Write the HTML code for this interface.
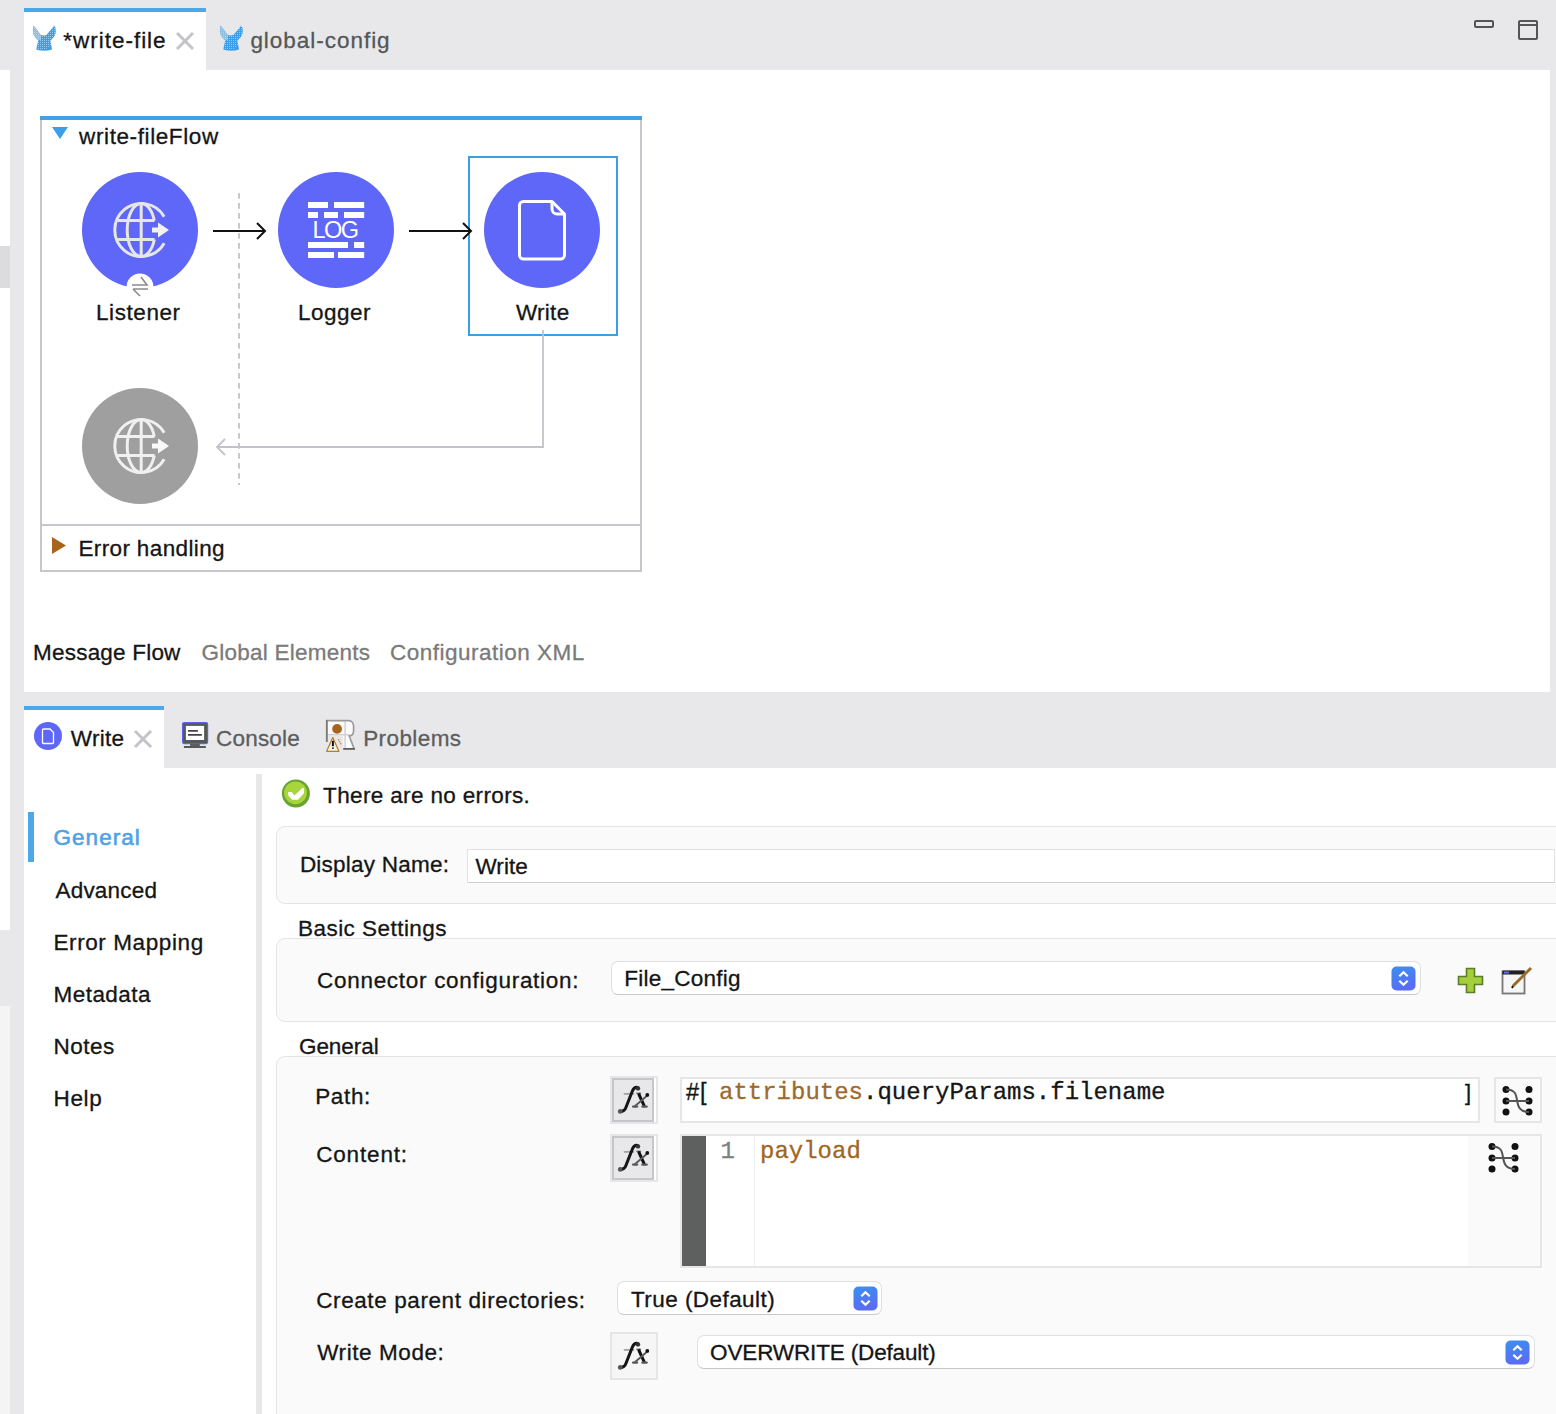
<!DOCTYPE html>
<html><head><meta charset="utf-8">
<style>
*{box-sizing:border-box}
html,body{margin:0;padding:0;width:1556px;height:1414px;overflow:hidden;background:#fff;font-family:"Liberation Sans",sans-serif;color:#151515}
.a{position:absolute}
.t{position:absolute;font-size:22.5px;line-height:1;white-space:nowrap;-webkit-text-stroke-width:0.3px}
.g{background:#e8e8ea}
svg{position:absolute;overflow:visible}
</style></head><body>
<svg width="0" height="0" style="position:absolute"><defs><linearGradient id="stg" x1="0" y1="0" x2="0.3" y2="1"><stop offset="0" stop-color="#3b90f0"/><stop offset="1" stop-color="#5a6cf2"/></linearGradient></defs></svg>
<!-- left strips -->
<div class="a g" style="left:0;top:0;width:10px;height:70px"></div>
<div class="a" style="left:0;top:246px;width:10px;height:42px;background:#dcdcdf"></div>
<div class="a g" style="left:0;top:930px;width:10px;height:76px"></div>
<div class="a" style="left:0;top:1006px;width:10px;height:408px;background:#f4f4f5"></div>
<div class="a g" style="left:10px;top:0;width:14px;height:1414px"></div>

<!-- top editor tab bar -->
<div class="a g" style="left:24px;top:0;width:1532px;height:70px"></div>
<div class="a" style="left:24px;top:8px;width:182px;height:62px;background:#fff"></div>
<div class="a" style="left:24px;top:8px;width:182px;height:4px;background:#4ba8ea"></div>
<div class="a g" style="left:1550px;top:70px;width:6px;height:622px"></div>

<div class="t" style="left:63.3px;top:30px;font-size:22.5px;letter-spacing:0.98px">*write-file</div>
<div class="t" style="left:250.4px;top:30px;font-size:22.5px;color:#555757;letter-spacing:0.97px">global-config</div>

<!-- close x -->
<svg style="left:175px;top:31px" width="20" height="20" viewBox="0 0 20 20"><path d="M2 2L18 18M18 2L2 18" stroke="#c4c4c8" stroke-width="3"/></svg>

<!-- min/max -->
<div class="a" style="left:1474px;top:20px;width:20px;height:8px;border:2px solid #555;border-radius:2px"></div>
<div class="a" style="left:1518px;top:20px;width:20px;height:20px;border:2px solid #555;border-radius:2px"></div>
<div class="a" style="left:1518px;top:24px;width:20px;height:2px;background:#555"></div>


<!-- mule icons -->
<svg style="left:30px;top:22px" width="30" height="32" viewBox="0 0 30 32"><defs><pattern id="dp1" width="2" height="2" patternUnits="userSpaceOnUse"><rect x="0" y="0" width="1" height="1" fill="#fff"/></pattern><clipPath id="mc1"><path d="M3.6 3.6C2.6 6 2.6 10.5 3.8 13C5 15.4 6.8 17.2 8.2 18.6L6.2 27.6Q14 30 22 27.6L20.4 18.6C22 17.2 23.8 15.4 25 13C26.2 10.5 26 6 24.4 3.6C22 6.5 19 10 16.5 13C15 13.6 12.6 13.6 11 13C8.6 10 6 6.5 3.6 3.6Z"/></clipPath></defs><g clip-path="url(#mc1)"><rect width="30" height="32" fill="#3a9fe8"/><path d="M0 0H30V17L12 30H0Z" fill="url(#dp1)" opacity="0.45"/><path d="M0 0H11V18H0Z" fill="#d8d8d8" opacity="0.55"/></g></svg>
<svg style="left:217px;top:22px" width="30" height="32" viewBox="0 0 30 32"><defs><pattern id="dp2" width="2" height="2" patternUnits="userSpaceOnUse"><rect x="0" y="0" width="1" height="1" fill="#fff"/></pattern><clipPath id="mc2"><path d="M3.6 3.6C2.6 6 2.6 10.5 3.8 13C5 15.4 6.8 17.2 8.2 18.6L6.2 27.6Q14 30 22 27.6L20.4 18.6C22 17.2 23.8 15.4 25 13C26.2 10.5 26 6 24.4 3.6C22 6.5 19 10 16.5 13C15 13.6 12.6 13.6 11 13C8.6 10 6 6.5 3.6 3.6Z"/></clipPath></defs><g clip-path="url(#mc2)"><rect width="30" height="32" fill="#3a9fe8"/><path d="M0 0H30V17L12 30H0Z" fill="url(#dp2)" opacity="0.45"/><path d="M0 0H11V18H0Z" fill="#d8d8d8" opacity="0.55"/></g></svg>

<!-- flow box -->
<div class="a" style="left:40px;top:116px;width:602px;height:456px;border:2px solid #c6c6cc;border-top:none"></div>
<div class="a" style="left:40px;top:116px;width:602px;height:4px;background:#3fa2e8"></div>
<div class="a" style="left:40px;top:524px;width:602px;height:2px;background:#c6c6cc"></div>
<svg style="left:52px;top:127px" width="16" height="13" viewBox="0 0 16 13"><path d="M0 0H16L8 12Z" fill="#3a9fe8"/></svg>
<div class="t" style="left:79.1px;top:126px;letter-spacing:0.6px">write-fileFlow</div>
<svg style="left:52px;top:537px" width="14" height="18" viewBox="0 0 14 18"><path d="M0 0L14 8.5L0 17Z" fill="#a8641c"/></svg>
<div class="t" style="left:78.4px;top:538px;letter-spacing:0.37px">Error handling</div>

<!-- circles -->
<div class="a" style="left:82px;top:172px;width:116px;height:116px;border-radius:50%;background:#5f67f8"></div>
<div class="a" style="left:278px;top:172px;width:116px;height:116px;border-radius:50%;background:#5f67f8"></div>
<div class="a" style="left:484px;top:172px;width:116px;height:116px;border-radius:50%;background:#5f67f8"></div>
<div class="a" style="left:82px;top:388px;width:116px;height:116px;border-radius:50%;background:#a09fa0"></div>
<div class="a" style="left:468px;top:156px;width:150px;height:180px;border:2px solid #38a0e6"></div>

<!-- globe -->
<svg style="left:82px;top:172px" width="116" height="116" viewBox="0 0 116 116">
<g fill="none" stroke="#e6e6e6" stroke-width="3">
<path d="M82.2 44.7A26.5 26.5 0 1 0 82.2 71.3"/>
<path d="M59.2 31.5A14 26.5 0 0 0 59.2 84.5M59.2 31.5A14 26.5 0 0 1 72.3 48.5M72.3 67.5A14 26.5 0 0 1 59.2 84.5"/>
<path d="M59.2 31.5V84.5M35.5 48.5H72.5M35.5 67.5H72.5"/>
</g>
<path d="M70 55.5H76V50.5L87 58L76 65.5V60.5H70Z" fill="#f2f2f2"/>
<circle cx="58" cy="115" r="13.5" fill="#fff"/>
<path d="M50 113H65L59 105M51 117H66M51 117L58 124" fill="none" stroke="#8c8c8c" stroke-width="1.6"/>
</svg>
<svg style="left:82px;top:388px" width="116" height="116" viewBox="0 0 116 116">
<g fill="none" stroke="#f0f0f0" stroke-width="3">
<path d="M82.2 44.7A26.5 26.5 0 1 0 82.2 71.3"/>
<path d="M59.2 31.5A14 26.5 0 0 0 59.2 84.5M59.2 31.5A14 26.5 0 0 1 72.3 48.5M72.3 67.5A14 26.5 0 0 1 59.2 84.5"/>
<path d="M59.2 31.5V84.5M35.5 48.5H72.5M35.5 67.5H72.5"/>
</g>
<path d="M70 55.5H76V50.5L87 58L76 65.5V60.5H70Z" fill="#f8f8f8"/>
</svg>

<!-- LOG icon -->
<svg style="left:296px;top:190px" width="80" height="80" viewBox="0 0 80 80">
<g fill="#fff">
<rect x="12" y="12" width="20" height="6"/><rect x="38" y="12" width="30.2" height="6"/>
<rect x="12" y="22" width="10" height="6"/><rect x="28" y="22" width="14" height="6"/><rect x="48" y="22" width="20.2" height="6"/>
<rect x="12" y="52" width="40" height="6"/><rect x="58" y="52" width="10.2" height="6"/>
<rect x="12" y="62" width="26" height="6"/><rect x="42" y="62" width="26.2" height="6"/>
</g>
<text x="16.6" y="48.2" font-family="Liberation Sans" font-size="23.5" fill="#fff" textLength="46.5">LOG</text>
</svg>

<!-- doc icon -->
<svg style="left:484px;top:172px" width="116" height="116" viewBox="0 0 116 116">
<path d="M39.5 29.5H68L80.5 42V83A4 4 0 0 1 76.5 87H39.5A4 4 0 0 1 35.5 83V33.5A4 4 0 0 1 39.5 29.5Z" fill="none" stroke="#fff" stroke-width="3" stroke-linejoin="round"/>
<path d="M68 29.5V37A5 5 0 0 0 73 42H80.5" fill="none" stroke="#fff" stroke-width="3" stroke-linejoin="round"/>
</svg>

<!-- arrows -->
<svg style="left:0;top:0" width="700" height="600" viewBox="0 0 700 600">
<path d="M239 193V485" stroke="#c2c2c8" stroke-width="1.8" stroke-dasharray="5.7 4.3" fill="none"/>
<path d="M213 231H265M257 223L265 231L257 239" stroke="#111" stroke-width="2" fill="none"/>
<path d="M409 231H471M463 223L471 231L463 239" stroke="#111" stroke-width="2" fill="none"/>
<path d="M543 330V447H217M225 439L217 447L225 455" stroke="#c2c2c8" stroke-width="1.8" fill="none"/>
</svg>

<div class="t" style="left:96px;top:302px;letter-spacing:0.57px">Listener</div>
<div class="t" style="left:298px;top:302px;letter-spacing:0.5px">Logger</div>
<div class="t" style="left:515.9px;top:302px;letter-spacing:0.3px">Write</div>


<!-- canvas bottom tabs -->
<div class="t" style="left:33.1px;top:641.5px;letter-spacing:0.2px">Message Flow</div>
<div class="t" style="left:201.5px;top:641.5px;color:#7a7a7a;letter-spacing:0.24px">Global Elements</div>
<div class="t" style="left:389.9px;top:641.5px;color:#7a7a7a;letter-spacing:0.5px">Configuration XML</div>

<!-- properties tab bar -->
<div class="a g" style="left:24px;top:692px;width:1532px;height:76px"></div>
<div class="a" style="left:24px;top:706px;width:140px;height:62px;background:#fff"></div>
<div class="a" style="left:24px;top:706px;width:140px;height:4px;background:#4ba8ea"></div>
<div class="a" style="left:33.6px;top:721.6px;width:28.4px;height:28.4px;border-radius:50%;background:#5f67f8"></div>
<svg style="left:33px;top:721px" width="30" height="30" viewBox="0 0 30 30"><path d="M10.5 8H17L20.5 11.5V21.5A1 1 0 0 1 19.5 22.5H10.5A1 1 0 0 1 9.5 21.5V9A1 1 0 0 1 10.5 8Z" fill="none" stroke="#fff" stroke-width="1.3"/></svg>
<div class="t" style="left:70.8px;top:727.5px;letter-spacing:0.3px">Write</div>
<svg style="left:133px;top:729px" width="20" height="20" viewBox="0 0 20 20"><path d="M2 2L18 18M18 2L2 18" stroke="#c4c4c8" stroke-width="3"/></svg>
<!-- console icon -->
<svg style="left:181px;top:721px" width="28" height="28" viewBox="0 0 28 28">
<rect x="1.6" y="1.6" width="25" height="21" rx="1.5" fill="#555a55" stroke="#5a63e8" stroke-width="1.2"/>
<rect x="4.9" y="4.9" width="18.2" height="14.1" fill="#fff"/>
<path d="M7 9.9H16.9M7 13.9H20.9" stroke="#444" stroke-width="1.7"/>
<rect x="9.1" y="22.6" width="9.7" height="2.4" fill="#5a5c6a"/>
<rect x="2.9" y="25" width="21.9" height="2" fill="#555a55"/>
</svg>
<div class="t" style="left:216.1px;top:727.5px;color:#5c5e5e;letter-spacing:0.17px">Console</div>
<!-- problems icon -->
<svg style="left:320px;top:714px" width="40" height="42" viewBox="0 0 40 42">
<path d="M6.5 6.5H28.5C32 6.5 33.5 9 33.5 12V17C33.5 20 32 21.5 29 22L34.5 34.5H23.5L23 22H7Z" fill="#fbfbfb"/>
<path d="M25.1 7.5V34M7.5 20.8H30" stroke="#cfcfd4" stroke-width="1.4"/>
<path d="M6.8 6.6H28.5C32 6.6 33.6 9.5 33.6 12.5V17C33.6 20 32 21.7 29.3 22.2L34 34.5" fill="none" stroke="#9a9a9a" stroke-width="1.7"/>
<rect x="5.9" y="5.9" width="1.9" height="22" fill="#7a7a7a"/>
<path d="M23.2 34.9H35" stroke="#555" stroke-width="1.7"/>
<circle cx="17.1" cy="14.9" r="4.9" fill="#a8641e"/>
<path d="M12.8 23.5L6.6 37.3H18.9Z" fill="#eef3dc" stroke="#b87a30" stroke-width="1.2" stroke-linejoin="round"/>
<path d="M12.9 26.8V32.2" stroke="#111" stroke-width="2"/>
<path d="M12.9 33.4V34.8" stroke="#111" stroke-width="1.8"/>
<path d="M18.4 25.2L21.4 31.2" stroke="#c07830" stroke-width="1.2" stroke-dasharray="1.3 0.9"/>
</svg>
<div class="t" style="left:363.2px;top:727.5px;color:#5c5e5e;letter-spacing:0.4px">Problems</div>

<!-- sidebar -->
<div class="a" style="left:28px;top:812px;width:6px;height:50px;background:#4ea7e6"></div>
<div class="t" style="left:53.5px;top:827px;color:#4fa3e4;font-size:22.5px;-webkit-text-stroke:0.6px #4fa3e4;letter-spacing:1.05px">General</div>
<div class="t" style="left:55.5px;top:879.5px;letter-spacing:0.2px">Advanced</div>
<div class="t" style="left:53.5px;top:932px;letter-spacing:0.59px">Error Mapping</div>
<div class="t" style="left:53.5px;top:983.5px;letter-spacing:0.46px">Metadata</div>
<div class="t" style="left:53.5px;top:1035.5px;letter-spacing:0.5px">Notes</div>
<div class="t" style="left:53.5px;top:1087.5px;letter-spacing:0.63px">Help</div>
<div class="a g" style="left:256px;top:774px;width:6px;height:640px"></div>


<!-- properties content -->
<svg style="left:281px;top:779px" width="30" height="30" viewBox="0 0 30 30">
<circle cx="14.9" cy="14.5" r="14" fill="#68a232"/>
<circle cx="14.5" cy="13.8" r="11.4" fill="#a8d43c"/>
<path d="M7.2 13.1H10.8L13.4 16.5L21.3 9.1H23V14.2L17 20.8H11.2L7.2 16.5Z" fill="#fff"/>
</svg>
<div class="t" style="left:323.1px;top:785px;letter-spacing:0.35px">There are no errors.</div>

<div class="a" style="left:276px;top:826px;width:1300px;height:78px;background:#fafafa;border:1px solid #e4e5e8;border-radius:9px"></div>
<div class="t" style="left:299.9px;top:854px;letter-spacing:0.23px">Display Name:</div>
<div class="a" style="left:467px;top:849px;width:1088px;height:34px;background:#fff;border:1px solid #e2e2e2;border-bottom-color:#cfcfcf"></div>
<div class="t" style="left:475.4px;top:856px;letter-spacing:0.1px">Write</div>

<div class="a" style="left:276px;top:938px;width:1300px;height:84px;background:#fafafa;border:1px solid #e4e5e8;border-radius:9px"></div>
<div class="t" style="left:298px;top:917.5px;letter-spacing:0.46px">Basic Settings</div>
<div class="t" style="left:317px;top:970px;letter-spacing:0.71px">Connector configuration:</div>
<div class="a" style="left:611px;top:961px;width:810px;height:34px;background:#fff;border:1px solid #e0e0e0;border-bottom:1.5px solid #c8c8cc;border-radius:7px"></div>
<div class="t" style="left:624.2px;top:967.5px;letter-spacing:0.24px">File_Config</div>
<svg style="left:1391px;top:966px" width="26" height="25" viewBox="0 0 26 25"><rect x="0.5" y="0.5" width="24" height="24" rx="5" fill="url(#stg)"/><path d="M8.3 10.2L12.5 6.2L16.7 10.2M8.3 14.8L12.5 18.8L16.7 14.8" fill="none" stroke="#fff" stroke-width="2.2"/></svg>
<!-- green plus -->
<svg style="left:1457px;top:967px" width="28" height="28" viewBox="0 0 28 28"><path d="M9.5 1.5H17.5V9.5H25.5V17.5H17.5V25.5H9.5V17.5H1.5V9.5H9.5Z" fill="#a4cf3a" stroke="#5c7d2a" stroke-width="1.6"/></svg>
<!-- edit icon -->
<svg style="left:1501px;top:965px" width="34" height="32" viewBox="0 0 34 32">
<rect x="1.5" y="6.5" width="22" height="22" fill="#f6f6f6" stroke="#777" stroke-width="1.8"/>
<rect x="1.5" y="5.5" width="22" height="4" fill="#222"/>
<rect x="3" y="6.5" width="5" height="2" fill="#5a6ff0"/>
<path d="M12 21L30 3" stroke="#9a6a2a" stroke-width="3"/>
<path d="M12 21L11 23" stroke="#111" stroke-width="2"/>
</svg>

<div class="a" style="left:276px;top:1056px;width:1300px;height:400px;background:#fafafa;border:1px solid #e4e5e8;border-radius:9px"></div>
<div class="t" style="left:299px;top:1035.5px;letter-spacing:-0.07px">General</div>

<div class="t" style="left:315.2px;top:1085.5px;letter-spacing:0.65px">Path:</div>
<div class="t" style="left:316.2px;top:1144px;letter-spacing:0.83px">Content:</div>
<div class="t" style="left:316.2px;top:1290px;letter-spacing:0.6px">Create parent directories:</div>
<div class="t" style="left:317.2px;top:1342px;letter-spacing:0.58px">Write Mode:</div>


<!-- path row -->
<div class="a" style="left:610px;top:1076px;width:48px;height:48px;border:2px solid #e6e6e8;background:#fff"><div class="a" style="left:0;top:0;width:42px;height:44px;border:2px solid #c5c6ca;background:#e8e8ea"></div><svg style="left:2px;top:4px" width="40" height="36" viewBox="0 0 40 36"><g fill="none" stroke-linecap="round"><path d="M10.5 11.8H19.5" stroke="#a0a0a0" stroke-width="1.8"/><path d="M23.5 5.4C21 5 19.3 6.6 18.3 9.2L11.8 25.8C11 28 9 29.6 6 29.5" stroke="#151515" stroke-width="3"/><path d="M23 11.3H26.3" stroke="#777" stroke-width="1.8"/><path d="M25 12.5L30.2 23.8" stroke="#111" stroke-width="3"/><path d="M33.6 13.2L20.8 24.2" stroke="#5a5a5a" stroke-width="1.9"/><path d="M19 24.6H23.2M28.3 24.6H32.8" stroke="#5a5a5a" stroke-width="2.2"/></g><circle cx="24" cy="6.4" r="2.2" fill="#333"/><circle cx="33.3" cy="12.9" r="1.9" fill="#111"/><circle cx="6.2" cy="29.4" r="2.3" fill="#555"/></svg></div>
<div class="a" style="left:680px;top:1077px;width:800px;height:46px;background:#fff;border:2px solid #e6e6e8"></div>
<div class="t" style="left:686px;top:1081px;font-size:23.5px;letter-spacing:1px">#[</div>
<div class="t" style="left:719px;top:1081px;font-family:'Liberation Mono';font-size:24px"><span style="color:#9c6a2c">attributes</span>.queryParams.filename</div>
<div class="t" style="left:1465px;top:1082px;font-size:22px">]</div>
<div class="a" style="left:1494px;top:1077px;width:48px;height:46px;background:#fafafa;border:2px solid #e6e6e8"></div>
<svg style="left:1502px;top:1086px" width="34" height="32" viewBox="0 0 34 32"><g fill="#111"><circle cx="4" cy="3.5" r="3.5"/><circle cx="4" cy="15" r="3.5"/><circle cx="4" cy="26" r="3.5"/><circle cx="27" cy="3.5" r="3.5"/><circle cx="27" cy="15" r="3.5"/><circle cx="27" cy="26" r="3.5"/></g><path d="M4 15H27M4 3.5C13 3.5 14 8 15 14C16 21 18 26 27 26" fill="none" stroke="#555" stroke-width="2"/></svg>

<!-- content row -->
<div class="a" style="left:610px;top:1134px;width:48px;height:48px;border:2px solid #e6e6e8;background:#fff"><div class="a" style="left:0;top:0;width:42px;height:44px;border:2px solid #c5c6ca;background:#e8e8ea"></div><svg style="left:2px;top:4px" width="40" height="36" viewBox="0 0 40 36"><g fill="none" stroke-linecap="round"><path d="M10.5 11.8H19.5" stroke="#a0a0a0" stroke-width="1.8"/><path d="M23.5 5.4C21 5 19.3 6.6 18.3 9.2L11.8 25.8C11 28 9 29.6 6 29.5" stroke="#151515" stroke-width="3"/><path d="M23 11.3H26.3" stroke="#777" stroke-width="1.8"/><path d="M25 12.5L30.2 23.8" stroke="#111" stroke-width="3"/><path d="M33.6 13.2L20.8 24.2" stroke="#5a5a5a" stroke-width="1.9"/><path d="M19 24.6H23.2M28.3 24.6H32.8" stroke="#5a5a5a" stroke-width="2.2"/></g><circle cx="24" cy="6.4" r="2.2" fill="#333"/><circle cx="33.3" cy="12.9" r="1.9" fill="#111"/><circle cx="6.2" cy="29.4" r="2.3" fill="#555"/></svg></div>
<div class="a" style="left:680px;top:1134px;width:862px;height:134px;background:#fff;border:2px solid #e6e6e8"></div>
<div class="a" style="left:682px;top:1136px;width:24px;height:130px;background:#5e6060"></div>
<div class="a" style="left:754px;top:1136px;width:1px;height:130px;background:#f0f0f0"></div>
<div class="a" style="left:1468px;top:1136px;width:72px;height:130px;background:#fafafa"></div>
<div class="t" style="left:720.5px;top:1140px;font-family:'Liberation Mono';font-size:24px;color:#808080">1</div>
<div class="t" style="left:760px;top:1140px;font-family:'Liberation Mono';font-size:24px;color:#a0661e">payload</div>
<svg style="left:1488px;top:1143px" width="34" height="32" viewBox="0 0 34 32"><g fill="#111"><circle cx="4" cy="3.5" r="3.5"/><circle cx="4" cy="15" r="3.5"/><circle cx="4" cy="26" r="3.5"/><circle cx="27" cy="3.5" r="3.5"/><circle cx="27" cy="15" r="3.5"/><circle cx="27" cy="26" r="3.5"/></g><path d="M4 15H27M4 3.5C13 3.5 14 8 15 14C16 21 18 26 27 26" fill="none" stroke="#555" stroke-width="2"/></svg>

<!-- create parent dirs -->
<div class="a" style="left:617px;top:1281px;width:265px;height:34px;background:#fff;border:1px solid #e0e0e0;border-bottom:1.5px solid #c8c8cc;border-radius:7px"></div>
<div class="t" style="left:631px;top:1289px;letter-spacing:0.44px">True (Default)</div>
<svg style="left:853px;top:1286px" width="26" height="25" viewBox="0 0 26 25"><rect x="0.5" y="0.5" width="24" height="24" rx="5" fill="url(#stg)"/><path d="M8.3 10.2L12.5 6.2L16.7 10.2M8.3 14.8L12.5 18.8L16.7 14.8" fill="none" stroke="#fff" stroke-width="2.2"/></svg>

<!-- write mode -->
<div class="a" style="left:610px;top:1332px;width:48px;height:48px;border:2px solid #e6e6e8;background:#f6f6f6"><svg style="left:2px;top:4px" width="40" height="36" viewBox="0 0 40 36"><g fill="none" stroke-linecap="round"><path d="M10.5 11.8H19.5" stroke="#a0a0a0" stroke-width="1.8"/><path d="M23.5 5.4C21 5 19.3 6.6 18.3 9.2L11.8 25.8C11 28 9 29.6 6 29.5" stroke="#151515" stroke-width="3"/><path d="M23 11.3H26.3" stroke="#777" stroke-width="1.8"/><path d="M25 12.5L30.2 23.8" stroke="#111" stroke-width="3"/><path d="M33.6 13.2L20.8 24.2" stroke="#5a5a5a" stroke-width="1.9"/><path d="M19 24.6H23.2M28.3 24.6H32.8" stroke="#5a5a5a" stroke-width="2.2"/></g><circle cx="24" cy="6.4" r="2.2" fill="#333"/><circle cx="33.3" cy="12.9" r="1.9" fill="#111"/><circle cx="6.2" cy="29.4" r="2.3" fill="#555"/></svg></div>
<div class="a" style="left:697px;top:1335px;width:838px;height:34px;background:#fff;border:1px solid #e0e0e0;border-bottom:1.5px solid #c8c8cc;border-radius:7px"></div>
<div class="t" style="left:710.1px;top:1342px;letter-spacing:-0.15px">OVERWRITE (Default)</div>
<svg style="left:1505px;top:1340px" width="26" height="25" viewBox="0 0 26 25"><rect x="0.5" y="0.5" width="24" height="24" rx="5" fill="url(#stg)"/><path d="M8.3 10.2L12.5 6.2L16.7 10.2M8.3 14.8L12.5 18.8L16.7 14.8" fill="none" stroke="#fff" stroke-width="2.2"/></svg>

</body></html>
